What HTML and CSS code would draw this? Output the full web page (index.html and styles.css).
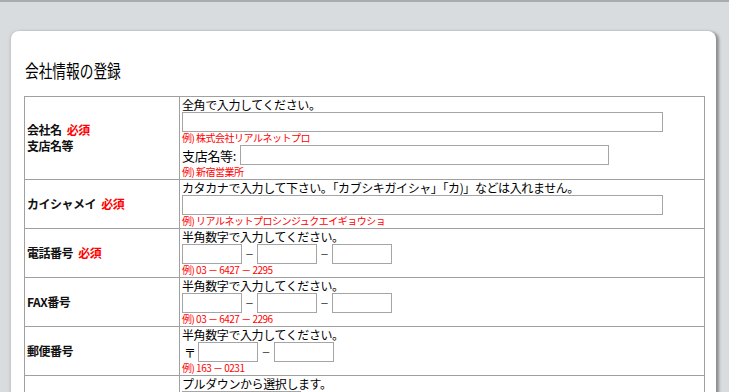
FILE: index.html
```
<!DOCTYPE html>
<html lang="ja">
<head>
    <meta charset="utf-8">
    <title>会社情報の登録</title>
    <link rel="stylesheet" href="styles.css">
</head>
<body>
    <div class="topbar"></div>

    <div class="card">
        <h1 class="title"><span>会社情報の登録</span></h1>

        <table class="form">
            <tr>
                <th>会社名 <span class="req">必須</span><br>支店名等</th>
                <td>
                    <div class="note">全角で入力してください。</div>
                    <div class="line"><input type="text" class="wide"></div>
                    <div class="example">例) 株式会社リアルネットプロ</div>
                    <div class="line branch">支店名等: <input type="text" class="branch-input"></div>
                    <div class="example">例) 新宿営業所</div>
                </td>
            </tr>
            <tr>
                <th>カイシャメイ <span class="req">必須</span></th>
                <td>
                    <div class="note">カタカナで入力して下さい。「カブシキガイシャ」「カ)」などは入れません。</div>
                    <div class="line"><input type="text" class="wide"></div>
                    <div class="example">例) リアルネットプロシンジュクエイギョウショ</div>
                </td>
            </tr>
            <tr>
                <th>電話番号 <span class="req">必須</span></th>
                <td>
                    <div class="note">半角数字で入力してください。</div>
                    <div class="line">
                        <input type="text" class="short"><span class="dash">－</span><input type="text" class="short"><span class="dash">－</span><input type="text" class="short">
                    </div>
                    <div class="example">例) 03 － 6427 － 2295</div>
                </td>
            </tr>
            <tr>
                <th>FAX番号</th>
                <td>
                    <div class="note">半角数字で入力してください。</div>
                    <div class="line">
                        <input type="text" class="short"><span class="dash">－</span><input type="text" class="short"><span class="dash">－</span><input type="text" class="short">
                    </div>
                    <div class="example">例) 03 － 6427 － 2296</div>
                </td>
            </tr>
            <tr>
                <th>郵便番号</th>
                <td>
                    <div class="note">半角数字で入力してください。</div>
                    <div class="line">
                        <span class="zip">〒</span><input type="text" class="short"><span class="dash zipdash">－</span><input type="text" class="short">
                    </div>
                    <div class="example">例) 163 － 0231</div>
                </td>
            </tr>
            <tr>
                <th>住所 <span class="req">必須</span></th>
                <td>
                    <div class="note">プルダウンから選択します。</div>
                    <div class="line">
                        <select class="pref">
                            <option>選択してください</option>
                            <option>東京都</option>
                        </select>
                    </div>
                    <div class="note">全角で入力してください。</div>
                    <div class="line"><input type="text" class="wide"></div>
                    <div class="example">例) 新宿区西新宿2-6-1</div>
                    <div class="note">ビル名・階数</div>
                    <div class="line"><input type="text" class="wide"></div>
                    <div class="example">例) 新宿住友ビル31階</div>
                </td>
            </tr>
        </table>
    </div>
</body>
</html>
```

FILE: styles.css
```
body
{
    margin: 0;
    background: #d9dcdf;
    font-family: "Noto Sans CJK JP", "DejaVu Sans", sans-serif;
    font-size: 12px;
    color: #000;
}

.topbar
{
    height: 2px;
    background: #a9acaf;
}

.card
{
    margin: 29px 0 0 11px;
    width: 705px;
    box-sizing: border-box;
    padding: 28px 11px 30px 13px;
    background: #fff;
    border-radius: 8px;
    box-shadow: 3px 1px 3px rgba(0, 0, 0, 0.35), -1px 0 3px rgba(0, 0, 0, 0.12);
}

.title
{
    margin: 0 0 15px 1px;
    font-size: 18px;
    line-height: 22px;
    font-weight: normal;
}

.title span
{
    display: inline-block;
    transform: scaleX(0.76);
    transform-origin: left center;
}

.form
{
    width: 681px;
    border-collapse: collapse;
}

.form th, .form td
{
    border: 1px solid #a0a0a0;
    padding: 0 2px 1px 2px;
}

.form th
{
    width: 150px;
    text-align: left;
    vertical-align: middle;
    font-weight: bold;
    line-height: 16px;
    letter-spacing: -0.5px;
    color: #111;
}

.form td
{
    vertical-align: top;
}

.req
{
    color: #f00;
    margin-left: 3px;
}

.note
{
    line-height: 15px;
    letter-spacing: -0.4px;
}

.line
{
    display: flex;
    align-items: center;
    height: 20px;
}

.line.branch
{
    height: 22px;
    font-size: 13px;
    letter-spacing: -0.3px;
}

input
{
    box-sizing: border-box;
    height: 20px;
    margin: 0;
    padding: 0 2px;
    border: 1px solid #a5a5a5;
    font: inherit;
}

.wide
{
    width: 481px;
}

.branch-input
{
    width: 369px;
    margin-left: 4px;
}

.short
{
    width: 60px;
}

.dash
{
    width: 15px;
    text-align: center;
    font-size: 9px;
}

.zipdash
{
    width: 16px;
}

.zip
{
    width: 16px;
    padding-left: 2px;
    box-sizing: border-box;
}

.pref
{
    height: 20px;
    font: inherit;
    border: 1px solid #a5a5a5;
}

.example
{
    color: #f00;
    font-size: 10px;
    line-height: 12px;
    letter-spacing: -0.5px;
}
```
